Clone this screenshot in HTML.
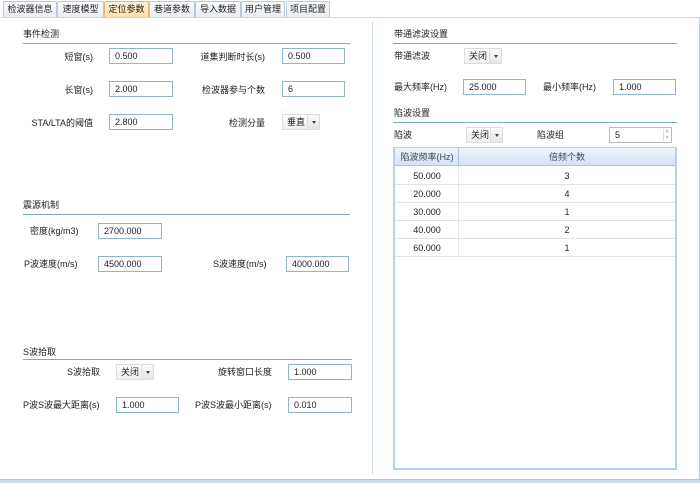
<!DOCTYPE html>
<html><head><meta charset="utf-8"><style>
*{box-sizing:border-box;margin:0;padding:0}
body{width:700px;height:483px;background:#fff;position:relative;overflow:hidden;font-family:"Liberation Sans","Noto Sans CJK SC",sans-serif;font-size:9px;color:#222}
.a{position:absolute;white-space:nowrap;line-height:12px}
.tab{position:absolute;top:1px;height:17px;border:1px solid #b9c9dc;border-bottom:none;background:linear-gradient(#fdfdfd,#e6ecf3);font-size:9px;line-height:15px;text-align:center;border-radius:2px 2px 0 0}
.tab.on{background:linear-gradient(#fff3dc,#fbdca6);border-color:#e0b770}
.in{position:absolute;height:16px;border:1px solid #8fb3dd;background:#fff;font-size:9px;line-height:14px;padding-left:5px}
.sel{position:absolute;height:16px;border:1px solid #ddd;background:linear-gradient(#fff,#eee);font-size:9px;line-height:14px;padding-left:4px}
.sel:after{content:"";position:absolute;right:0;top:0;width:11px;height:14px;border-left:1px solid #ddd;background:linear-gradient(#fafafa,#e6e6e6)}
.sel i{position:absolute;right:3px;top:6px;border:2px solid transparent;border-top:3px solid #444;z-index:1}
.ln{position:absolute;height:1px;background:#7da7d9}
.r{text-align:right}
</style></head><body>
<div class="tab" style="left:3px;width:54px">检波器信息</div>
<div class="tab" style="left:57px;width:47px">速度模型</div>
<div class="tab on" style="left:104px;width:45px">定位参数</div>
<div class="tab" style="left:149px;width:46px">巷道参数</div>
<div class="tab" style="left:195px;width:46px">导入数据</div>
<div class="tab" style="left:241px;width:44px">用户管理</div>
<div class="tab" style="left:286px;width:44px">项目配置</div>
<div style="position:absolute;left:0;top:17px;width:700px;height:1px;background:#c4d6ea"></div>
<div style="position:absolute;left:699px;top:17px;width:1px;height:466px;background:#b8cde6"></div>
<div style="position:absolute;left:0;top:479px;width:700px;height:4px;background:#c8daf0;border-top:1px solid #a9c4e6"></div>
<div style="position:absolute;left:372px;top:22px;width:1px;height:452px;background:#c7d9ee"></div>

<div class="a" style="left:23px;top:28px">事件检测</div><div class="ln" style="left:23px;top:43px;width:327px"></div>
<div class="a r" style="left:30px;top:51px;width:63px">短窗(s)</div><div class="in" style="left:109px;top:48px;width:64px">0.500</div>
<div class="a r" style="left:30px;top:84px;width:63px">长窗(s)</div><div class="in" style="left:109px;top:81px;width:64px">2.000</div>
<div class="a r" style="left:10px;top:117px;width:83px">STA/LTA的阈值</div><div class="in" style="left:109px;top:114px;width:64px">2.800</div>
<div class="a r" style="left:180px;top:51px;width:85px">道集判断时长(s)</div><div class="in" style="left:282px;top:48px;width:63px">0.500</div>
<div class="a r" style="left:180px;top:84px;width:85px">检波器参与个数</div><div class="in" style="left:282px;top:81px;width:63px">6</div>
<div class="a r" style="left:180px;top:117px;width:85px">检测分量</div><div class="sel" style="left:282px;top:114px;width:38px">垂直<i></i></div>

<div class="a" style="left:23px;top:199px">震源机制</div><div class="ln" style="left:23px;top:214px;width:327px"></div>
<div class="a" style="left:30px;top:225px">密度(kg/m3)</div><div class="in" style="left:98px;top:223px;width:64px">2700.000</div>
<div class="a" style="left:24px;top:258px">P波速度(m/s)</div><div class="in" style="left:98px;top:256px;width:64px">4500.000</div>
<div class="a" style="left:213px;top:258px">S波速度(m/s)</div><div class="in" style="left:286px;top:256px;width:63px">4000.000</div>

<div class="a" style="left:23px;top:346px">S波拾取</div><div class="ln" style="left:23px;top:359px;width:329px"></div>
<div class="a r" style="left:30px;top:366px;width:70px">S波拾取</div><div class="sel" style="left:116px;top:364px;width:38px">关闭<i></i></div>
<div class="a r" style="left:180px;top:366px;width:92px">旋转窗口长度</div><div class="in" style="left:288px;top:364px;width:64px">1.000</div>
<div class="a" style="left:23px;top:399px">P波S波最大距离(s)</div><div class="in" style="left:116px;top:397px;width:63px">1.000</div>
<div class="a" style="left:195px;top:399px">P波S波最小距离(s)</div><div class="in" style="left:288px;top:397px;width:64px">0.010</div>

<div class="a" style="left:394px;top:28px">带通滤波设置</div><div class="ln" style="left:393px;top:43px;width:284px"></div>
<div class="a" style="left:394px;top:50px">带通滤波</div><div class="sel" style="left:464px;top:48px;width:38px">关闭<i></i></div>
<div class="a" style="left:394px;top:81px">最大频率(Hz)</div><div class="in" style="left:463px;top:79px;width:63px">25.000</div>
<div class="a" style="left:543px;top:81px">最小频率(Hz)</div><div class="in" style="left:613px;top:79px;width:63px">1.000</div>
<div class="a" style="left:394px;top:107px">陷波设置</div><div class="ln" style="left:393px;top:122px;width:284px"></div>
<div class="a" style="left:394px;top:129px">陷波</div><div class="sel" style="left:466px;top:127px;width:37px">关闭<i></i></div>
<div class="a" style="left:537px;top:129px">陷波组</div>
<div class="in" style="left:609px;top:127px;width:63px;border-color:#bbb">5<span style="position:absolute;right:1px;top:1px;width:7px;height:12px;border-left:1px solid #ddd;font-size:5px;line-height:6px;color:#666;text-align:center">˄<br>˅</span></div>

<div style="position:absolute;left:393px;top:147px;width:284px;height:323px;border:2px solid #b7d0ee;border-top:1px solid #b7d0ee;background:#fff">
<div style="position:absolute;left:0;top:0;width:280px;height:18px;background:linear-gradient(#eef4fb,#d3e3f5);border-bottom:1px solid #a9c4e6"></div>
<div class="a" style="left:0;top:3px;width:64px;text-align:center;color:#445">陷波频率(Hz)</div>
<div style="position:absolute;left:63px;top:0;width:1px;height:18px;background:#a9c4e6"></div>
<div class="a" style="left:64px;top:3px;width:216px;text-align:center;color:#445">倍频个数</div>
<div style="position:absolute;left:63px;top:18px;width:1px;height:90px;background:#e6e6e6"></div>
<div class="a" style="left:0;top:22px;width:64px;text-align:center">50.000</div><div class="a" style="left:64px;top:22px;width:216px;text-align:center">3</div>
<div style="position:absolute;left:0;top:36px;width:280px;height:1px;background:#e4e4e4"></div>
<div class="a" style="left:0;top:40px;width:64px;text-align:center">20.000</div><div class="a" style="left:64px;top:40px;width:216px;text-align:center">4</div>
<div style="position:absolute;left:0;top:54px;width:280px;height:1px;background:#e4e4e4"></div>
<div class="a" style="left:0;top:58px;width:64px;text-align:center">30.000</div><div class="a" style="left:64px;top:58px;width:216px;text-align:center">1</div>
<div style="position:absolute;left:0;top:72px;width:280px;height:1px;background:#e4e4e4"></div>
<div class="a" style="left:0;top:76px;width:64px;text-align:center">40.000</div><div class="a" style="left:64px;top:76px;width:216px;text-align:center">2</div>
<div style="position:absolute;left:0;top:90px;width:280px;height:1px;background:#e4e4e4"></div>
<div class="a" style="left:0;top:94px;width:64px;text-align:center">60.000</div><div class="a" style="left:64px;top:94px;width:216px;text-align:center">1</div>
<div style="position:absolute;left:0;top:108px;width:280px;height:1px;background:#e4e4e4"></div>
</div>
</body></html>
